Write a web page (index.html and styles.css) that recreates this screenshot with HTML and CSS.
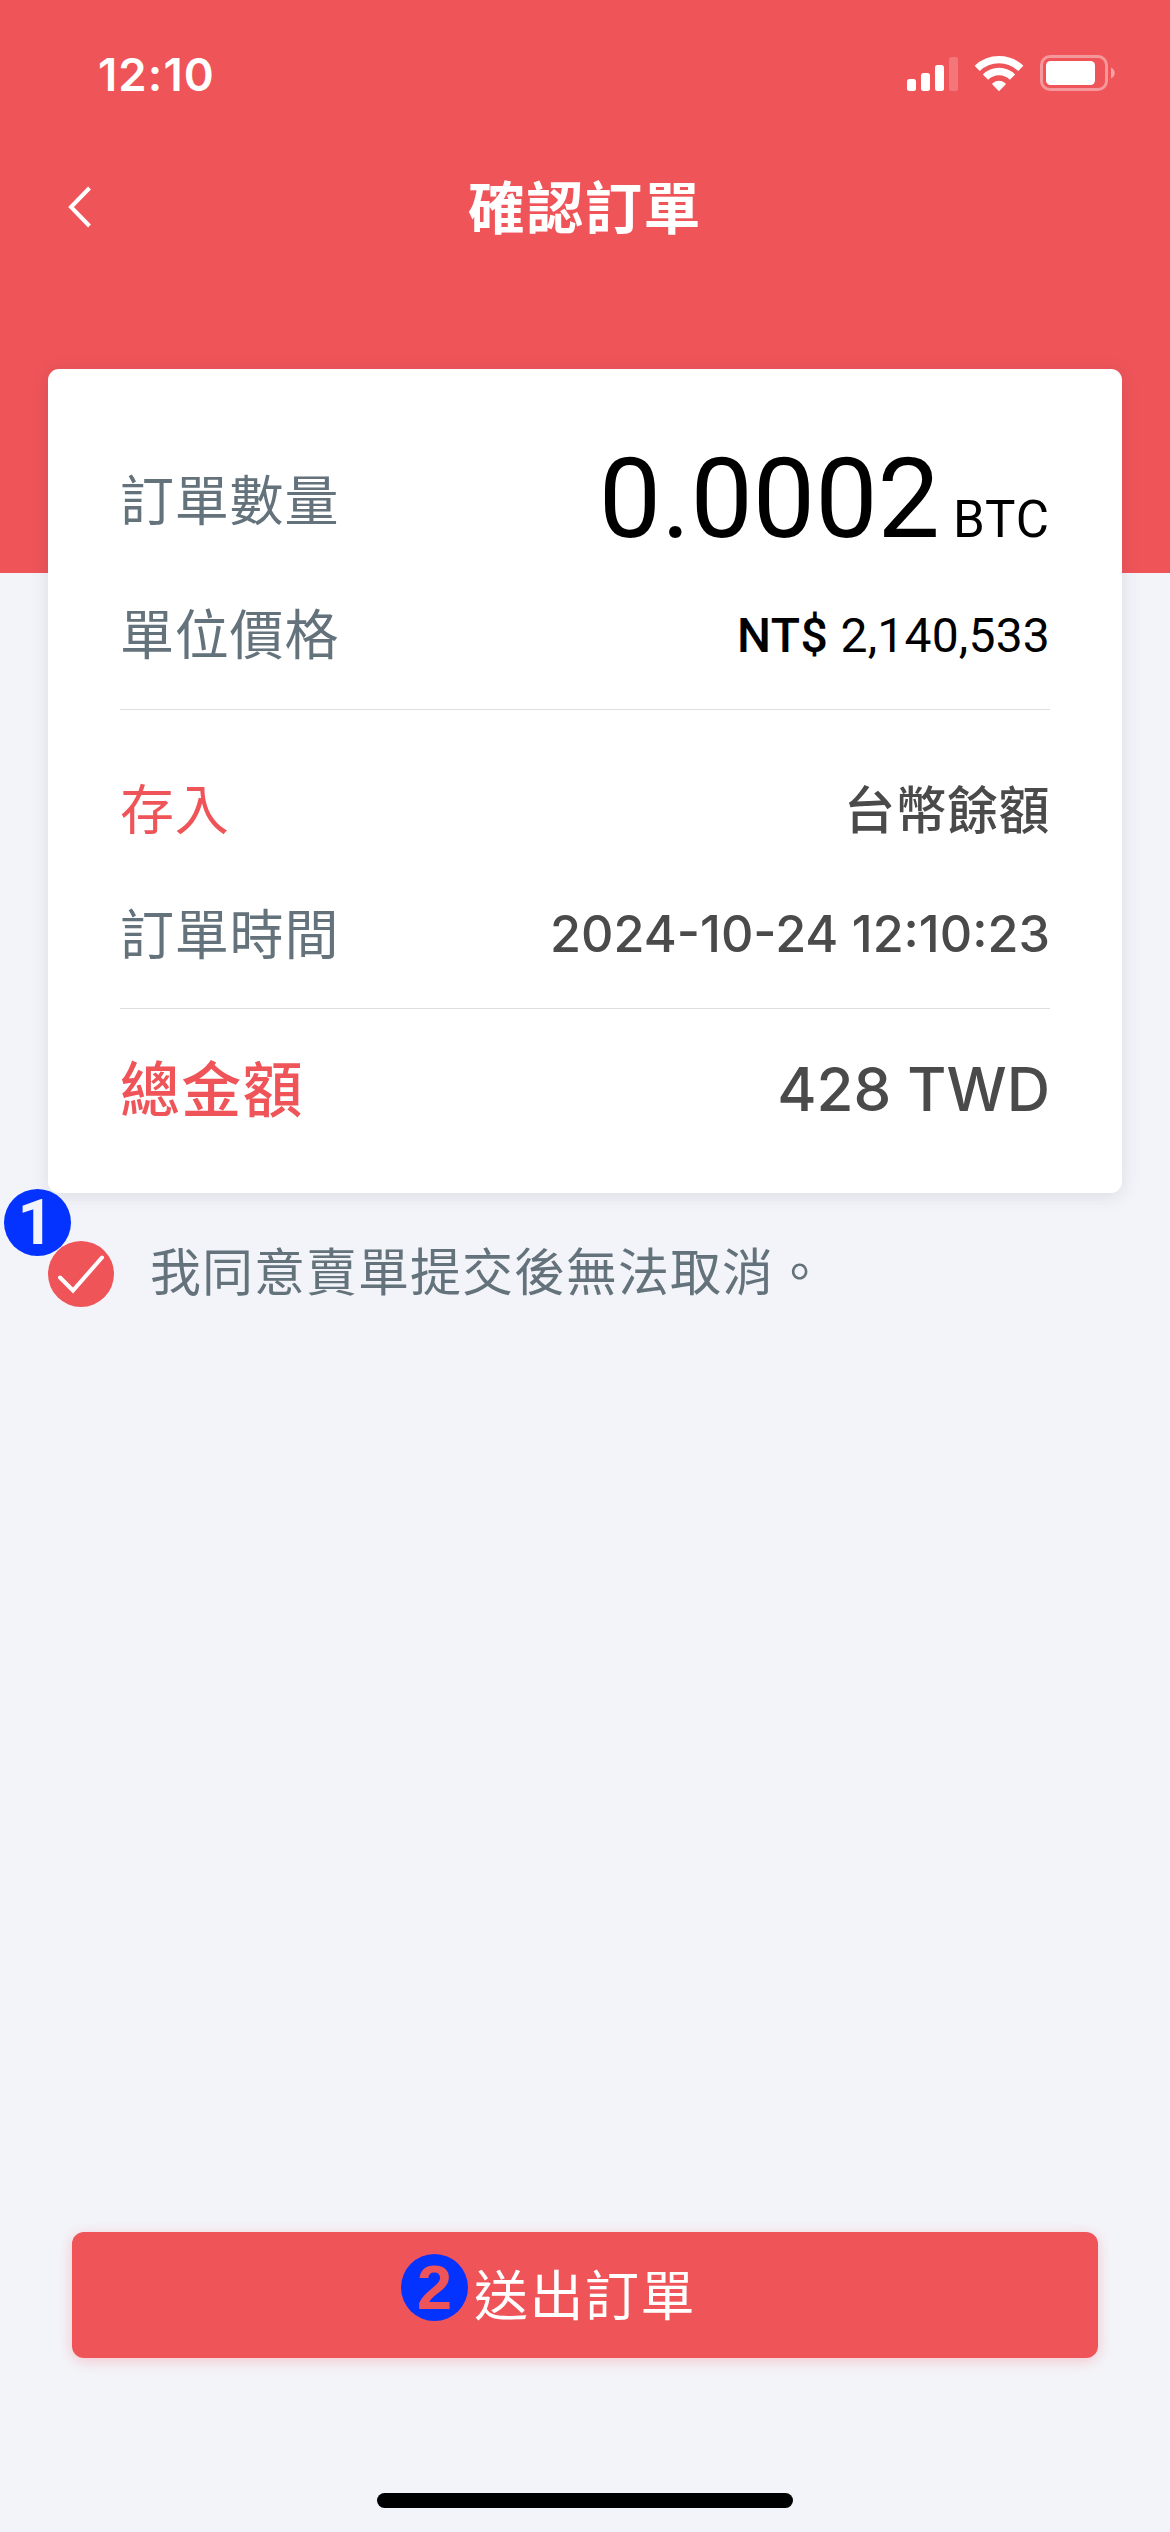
FILE: index.html
```html
<!DOCTYPE html>
<html lang="zh-Hant">
<head>
<meta charset="utf-8">
<title>確認訂單</title>
<link rel="stylesheet" href="styles.css">
</head>
<body>
<div class="screen">
  <header class="header">
    <div class="status">
      <span class="clock">12:10</span>
      <div class="indicators">
        <svg width="46" height="38" viewBox="0 0 46 38" fill="#fff">
          <rect x="0" y="25" width="9" height="12" rx="2.5"/>
          <rect x="14" y="19" width="9" height="18" rx="2.5"/>
          <rect x="28" y="11" width="9" height="26" rx="2.5"/>
          <rect x="42" y="3" width="9" height="34" rx="2.5" opacity=".2"/>
        </svg>
        <svg class="wifi" width="50" height="38" viewBox="0 0 50 38" fill="none" stroke="#fff" stroke-width="7.4">
          <path d="M3.2 14.4A31.5 31.5 0 0 1 46.8 14.4"/>
          <path d="M11.5 23.2A19 19 0 0 1 38.5 23.2"/>
          <path d="M25 37.2L18.4 30.5Q17.8 29.8 18.6 29.2Q25 24.3 31.4 29.2Q32.2 29.8 31.6 30.5Z" fill="#fff" stroke="none"/>
        </svg>
        <svg class="battery" width="76" height="38" viewBox="0 0 76 38">
          <rect x="1.5" y="3.5" width="65" height="33" rx="8.5" fill="none" stroke="#fff" stroke-width="3" opacity=".4"/>
          <rect x="6" y="8" width="49" height="24" rx="4.5" fill="#fff"/>
          <path d="M71 14.5C76 17 76 23 71 25.500Z" fill="#fff" opacity=".45"/>
        </svg>
      </div>
    </div>
    <nav class="nav">
      <svg class="back" width="24" height="42" viewBox="0 0 24 42" fill="none" stroke="#fff" stroke-width="4">
        <path d="M21.500 2L3 21L21.500 40"/>
      </svg>
      <h1 class="title">確認訂單</h1>
    </nav>
  </header>

  <main class="card">
    <div class="row row-amount">
      <span class="label">訂單數量</span>
      <span class="amount">0.0002<span class="unit">BTC</span></span>
    </div>
    <div class="row row-price">
      <span class="label">單位價格</span>
      <span class="price"><span class="currency">NT$</span> 2,140,533</span>
    </div>
    <hr class="divider">
    <div class="row row-deposit">
      <span class="label accent">存入</span>
      <span class="account">台幣餘額</span>
    </div>
    <div class="row row-time">
      <span class="label">訂單時間</span>
      <span class="time">2024-10-24 12:10:23</span>
    </div>
    <hr class="divider">
    <div class="row row-total">
      <span class="label total-label">總金額</span>
      <span class="total">428 TWD</span>
    </div>
  </main>

  <div class="agree">
    <span class="badge badge-one">1</span>
    <svg class="check" width="66" height="66" viewBox="0 0 66 66">
      <circle cx="33" cy="33" r="33" fill="#ef5459"/>
      <path d="M12 36.500L25 49.500L54 16.500" fill="none" stroke="#fff" stroke-width="4" stroke-linecap="round"/>
    </svg>
    <span class="agree-text">我同意賣單提交後無法取消。</span>
  </div>

  <button class="submit"><span class="badge badge-two">2</span>送出訂單</button>
  <div class="home"></div>
</div>
</body>
</html>
```

FILE: styles.css
```css
* { box-sizing: border-box; }
body { margin: 0; background: #f3f4f9; }

.screen {
  display: flex;
  flex-direction: column;
  width: 1170px;
  height: 2532px;
  overflow: hidden;
  font-family: "Noto Sans CJK TC", sans-serif;
}

.header { height: 573px; background: #ef5459; color: #fff; }

.status {
  display: flex;
  justify-content: space-between;
  height: 150px;
  padding: 44px 54px 0 98px;
}
.clock {
  font: 600 45.500px/62px Inter, sans-serif;
  letter-spacing: 1.100px;
}
.indicators { display: flex; padding-top: 10px; }
.indicators svg { display: block; overflow: visible; }
.wifi { margin-left: 21px; }
.battery { margin: -1px 0 0 16px; }

.nav {
  display: grid;
  grid-template-columns: 1fr auto 1fr;
  align-items: center;
  height: 114px;
  padding: 0 68px;
}
.title {
  margin: 0 0 7px;
  font-size: 57px;
  font-weight: 700;
  line-height: 80px;
  letter-spacing: 1.500px;
}

.card {
  height: 824px;
  margin: -204px 48px 0;
  padding: 69px 72px 0;
  border-radius: 11px;
  background: #fff;
  box-shadow: 0 3px 18px rgba(50, 70, 80, .13);
}
.row { display: flex; align-items: center; justify-content: space-between; }
.row-amount { height: 120px; }
.row-price { height: 148px; }
.row-deposit { height: 125px; margin-top: 34px; }
.row-time { height: 125px; }
.row-total { height: 154px; }
.divider { height: 1px; margin: 3px 0 0; border: 0; background: #ddd; }
.row-time + .divider { margin-top: 14px; }

.label { font-size: 54px; line-height: 74px; letter-spacing: 0.800px; color: #63727b; }
.accent { color: #ef5459; }
.total-label { font-size: 60px; font-weight: 500; letter-spacing: 1.200px; color: #ef5459; }

.amount { padding-top: 23px; font: 400 111px/120px Roboto, sans-serif; color: #000; }
.unit { margin-left: 13px; font-size: 51px; letter-spacing: 1px; }
.price { padding-top: 7px; font: 400 48px/60px Roboto, sans-serif; letter-spacing: 0.200px; color: #000; }
.currency { font-weight: 500; letter-spacing: 0.500px; }
.account {
  font-size: 51px;
  font-weight: 500;
  line-height: 70px;
  letter-spacing: 0.500px;
  color: #4a4a4a;
}
.time { padding-top: 4px; font: 500 50.300px/60px Inter, sans-serif; color: #4a4a4a; }
.total { padding-top: 5px; font: 500 60px/70px Inter, sans-serif; color: #4a4a4a; }

.agree {
  position: relative;
  display: flex;
  align-items: flex-start;
  height: 66px;
  margin: 48px 48px 0;
}
.agree-text {
  margin-left: 36px;
  font-size: 51px;
  line-height: 57px;
  letter-spacing: 1px;
  color: #63727b;
}

.badge {
  position: absolute;
  width: 67px;
  height: 67px;
  border-radius: 50%;
  background: #0433ff;
  font: 700 63px/67px "Liberation Sans", sans-serif;
  text-align: center;
}
.badge-one {
  left: -44px;
  top: -52px;
  padding-right: 4px;
  font-family: Roboto, sans-serif;
  color: #f3f4f9;
}
.badge-two { left: 329px; top: 22px; color: #ef5459; letter-spacing: 0; }

.submit {
  position: relative;
  height: 126px;
  margin: auto 72px 135px;
  padding: 0 0 5px;
  border: 0;
  border-radius: 12px;
  background: #ef5459;
  box-shadow: 0 3px 14px rgba(239, 84, 89, .28);
  font: 400 54px/80px "Noto Sans CJK TC", sans-serif;
  letter-spacing: 1.500px;
  color: #fff;
}

.home {
  width: 416px;
  height: 15px;
  margin: 0 auto 24px;
  border-radius: 8px;
  background: #000;
}
```
